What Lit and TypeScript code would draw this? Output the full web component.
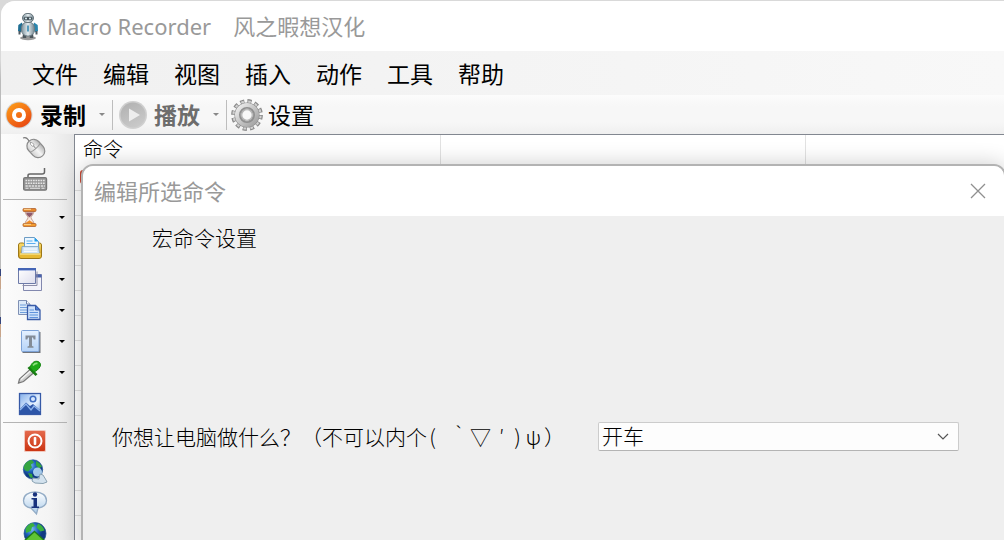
import { LitElement, html, css, svg, nothing, TemplateResult } from "lit";
import { customElement, property } from "lit/decorators.js";

const icons: Record<string, TemplateResult> = {
  robot: svg`
    <ellipse cx="14" cy="26" rx="8" ry="2.2" fill="#777" opacity=".75"/>
    <path d="M8 10.500 4.300 13l-.3 6 3 1.500 2-6z" fill="#1f6f94"/><path d="m20 10.500 3.700 2.500.3 6-3 1.500-2-6z" fill="#2a86ae"/>
    <path d="M5.500 19v3.500M22.500 19v3.500" stroke="#4e5960" stroke-width="2"/>
    <path d="M10.500 22v4M17.500 22v4" stroke="#4c565c" stroke-width="3.500"/>
    <rect x="7.500" y="10" width="13" height="14" rx="6" fill="url(#gSteel)" stroke="#6b7b84"/>
    <path d="M13.200 13.500h1.600v6h-1.600z" fill="#3288b1"/>
    <rect x="8.500" y="1.500" width="11" height="9" rx="4.500" fill="url(#gSteel)" stroke="#69767d"/>
    <rect x="9.800" y="4.800" width="8.400" height="3.400" rx="1.700" fill="#46535b"/>
    <circle cx="12" cy="6.500" r="1" fill="#dff2f8"/><circle cx="16" cy="6.500" r="1" fill="#dff2f8"/>`,
  record: svg`
    <circle cx="14" cy="14" r="13.500" fill="#d3d3d3"/><circle cx="14" cy="14" r="12.500" fill="url(#gOrange)"/>
    <circle cx="14" cy="14" r="5" fill="none" stroke="#fff" stroke-width="4"/>`,
  play: svg`
    <circle cx="14" cy="14" r="14" fill="#d0d0d0"/><circle cx="14" cy="14" r="12.500" fill="url(#gGray)"/>
    <path d="M10 7.500v13L21 14z" fill="#ededed"/>`,
  gear: svg`
    <circle cx="14" cy="14" r="12" fill="none" stroke="#8b8b8b" stroke-width="3.800" stroke-dasharray="3.600 2.683"/>
    <circle cx="14" cy="14" r="11.500" fill="none" stroke="#d2d2d2" stroke-width="2.600" stroke-dasharray="2.200 3.821" stroke-dashoffset="-.7"/>
    <circle cx="14" cy="14" r="8" fill="none" stroke="#8e8e8e" stroke-width="6"/>
    <circle cx="14" cy="14" r="8" fill="none" stroke="url(#gMetal)" stroke-width="5"/>
    <circle cx="14" cy="14" r="6.300" fill="none" stroke="#8f8f8f" stroke-width="1.400"/>
    <circle cx="14" cy="14" r="4.600" fill="#f8f8f8" stroke="#b5b5b5"/>`,
  mouse: svg`
    <path d="M2 2c3-1 4 0 5 1.500l2 3" fill="none" stroke="#777" stroke-width="1.300"/>
    <g transform="rotate(-42 15 13)"><rect x="8.500" y="2.500" width="13.500" height="20" rx="6.700" fill="url(#gMouse)" stroke="#8b8b8b" stroke-width="1.200"/>
    <path d="M8.500 11.500c3 1.500 10 1.500 13.500 0M15.200 3v9" fill="none" stroke="#999"/><rect x="14" y="5" width="2.500" height="4" rx="1.200" fill="#fff" stroke="#888" stroke-width=".7"/></g>`,
  keyboard: svg`
    <path d="M7 11V8.500Q7 7 9 7h12q2.500 0 2.500-2V1" fill="none" stroke="#666" stroke-width="1.500"/>
    <rect x="2.600" y="10.600" width="23" height="12.600" rx="1.500" fill="#959595" stroke="#777" stroke-width="1.200"/>
    <path d="M4.500 13.500h19.500M4.500 16.200h19.500" stroke="#e4e4e4" stroke-width="1.500" stroke-dasharray="1.700 .8"/>
    <path d="M4.500 18.900h19.500" stroke="#dedede" stroke-width="1.500" stroke-dasharray="2.300 .8"/>
    <path d="M4.500 21.300h3M9 21.300h10M20.500 21.300h3" stroke="#e6e6e6" stroke-width="1.100"/>`,
  hourglass: svg`
    <path d="M9 7c0 4 3 4.500 3 6.500S9 17 9 20h9c0-3-3-4.500-3-6.500S18 11 18 7z" fill="#f7e7df" stroke="#c59c8c"/>
    <path d="M10 8.500h7c-.4 2.500-2.500 3.500-3.500 5-1-1.500-3.100-2.500-3.500-5z" fill="#8f5a6a"/>
    <path d="M9.500 20c.5-2.500 3-2 4-4 1 2 3.500 1.500 4 4z" fill="#f08c24"/>
    <rect x="7" y="4.500" width="13" height="3" rx="1" fill="#e5882d" stroke="#b0622d" stroke-width=".8"/>
    <rect x="7" y="19.500" width="13" height="3" rx="1" fill="#f29a2e" stroke="#b0622d" stroke-width=".8"/>
    <path d="M8 5.300h7M8 20.300h7" stroke="#ffd99a"/>`,
  folder: svg`
    <path d="M2.500 10q0-2 2-2h3l2 2h9l2-2h3q2 0 2 2v11q0 2.500-2.500 2.500H5q-2.500 0-2.500-2.500z" fill="url(#gGold)" stroke="#9d7817"/>
    <path d="M8.500 2.500h10l4 4V15h-14z" fill="#eaf6ff" stroke="#6d9cc4"/><path d="M18.500 2.500v4h4z" fill="#1fa0f0"/>
    <path d="M10.500 6h6M10.500 8.500h9" stroke="#5aaef0"/>
    <path d="M6 11.500h16.500l1 7H5.500z" fill="#cfe4f7" stroke="#7aa0bd" stroke-width=".8"/><path d="M8 14h13M8 16.300h13" stroke="#fff"/>
    <path d="M3.500 18.500h21.500v2.500q0 2-2 2H5.500q-2 0-2-2z" fill="#e7ba34"/><path d="M4 19h20.500" stroke="#fff0a8"/>`,
  windows: svg`
    <path d="M7.500 8.500h18v16h-18z" fill="#f2f2fa" stroke="#8288ae"/><path d="M20 8.500h5.500v3H20z" fill="#4963ab"/>
    <path d="M6.500 19.500h14.500v-14" fill="none" stroke="#8c8ca8"/>
    <path d="M2.500 2.500h17v15h-17z" fill="url(#gPane)" stroke="#6d7aa8"/><path d="M2 2h18v2.500H2z" fill="#4565b5"/><path d="M3 4.500h16" stroke="#a9b9e4"/>`,
  docs: svg`
    <path d="M2.500 3.500h8l3.500 3.500v10.500H2.500z" fill="#dceaf9" stroke="#7f90b4"/><path d="M10.500 3.500V7H14" fill="#fff" stroke="#6b7fa9"/>
    <path d="M4 8h6M4 10.500h7M4 13h7M4 15.500h7" stroke="#6f9edb"/>
    <path d="M11.500 8.500h8l4.500 4.500v9.500H11.500z" fill="#cfe2fb" stroke="#3a5ca8" stroke-width="1.300"/><path d="M19.500 8.500V13H24z" fill="#4c7cd2" stroke="#3a5ca8"/>
    <path d="M13.500 13h4.500M13.500 15.500h8.500M13.500 18h8.500M13.500 20.500h8.500" stroke="#5f93dc" stroke-width="1.200"/>`,
  textbox: svg`
    <rect x="6.500" y="4" width="18" height="21" fill="#70757d"/><rect x="5.500" y="2.500" width="17.500" height="21" rx="1" fill="url(#gBlue)" stroke="#7da2d6"/>
    <path d="M9.500 7.500h10v4h-1.800l-.7-2H16v8.500l1.500.5v1.300h-6V18.500L13 18V9.500h-1l-.7 2H9.500z" fill="#838c97"/>`,
  dropper: svg`
    <path d="m2.500 24 1-4L14 10.500l3.500 3.500L7.500 22.500z" fill="#cfcfcf" stroke="#777" stroke-width="1.200"/><path d="m5 20.500 10-9" stroke="#f5f5f5" stroke-width="1.300"/>
    <path d="m11.500 9 2-1.800 8 8-2 1.800z" fill="#187b13"/>
    <path d="M14 8.500c1.500-4.500 4-6.500 7-6.200 3 .3 4.400 3 2.800 5.700-1.200 2.200-3.300 4-5.800 5z" fill="#1eaa19" stroke="#14850f"/><path d="M17 6.500q2-2.500 4.500-2" stroke="#8be27c" stroke-width="1.700" fill="none"/>`,
  picture: svg`
    <rect x="2.500" y="2.500" width="23" height="23" fill="#fff"/><rect x="3.500" y="3.500" width="21" height="21" fill="url(#gSky)" stroke="#3659a6" stroke-width="1.300"/>
    <circle cx="17" cy="9" r="2.800" fill="#d5e7ff" stroke="#3e6cc0" stroke-width="1.500"/>
    <path d="M4 19 10 12.500l4 3.500 3-2 7 6v4H4z" fill="#2d56a8"/><path d="m4 20 6-6 5 6 3-4 6 5" fill="none" stroke="#8db4ec" stroke-width="1.300"/>`,
  power: svg`
    <rect x="3" y="3" width="22" height="22" rx="1.500" fill="#f1c6bb"/><rect x="4" y="4" width="20" height="20" rx="1" fill="url(#gRed)"/>
    <circle cx="14" cy="14" r="6.500" fill="none" stroke="#fff" stroke-width="2"/><rect x="12.700" y="10" width="2.600" height="8" rx="1" fill="#fff"/>`,
  web: svg`
    <circle cx="12" cy="11.500" r="9.700" fill="url(#gGlobe)" stroke="#245898" stroke-width=".7"/>
    <path d="M4 6q3-3.700 7-4l2 2.500-3 2 1 3-4 4-3-1-1.500-3zM15 3q4 1.500 6 5.500l-3 2-3-3zM7 15l4 1 1 4-3-.5z" fill="#35a541"/>
    <circle cx="16.500" cy="14" r="4.500" fill="#b5d9f5" opacity=".9"/>
    <path d="m12 20 6 1 1-5 3 1 3 5 1 2-4 1.500-8-.5-3-2z" fill="#d3e2ee" stroke="#8aa2b2"/>`,
  info: svg`
    <path d="M14 3c-7 0-11.500 3.500-11.500 8.500 0 4.300 3 6.800 7.500 7.500l5.500 6 1.500-6c5-.7 8.500-3.500 8.500-7.500C25.500 6.500 21 3 14 3z" fill="url(#gBubble)" stroke="#93acc6" stroke-width="1.300"/>
    <circle cx="14" cy="5.500" r="2.200" fill="#17327e"/><path d="M10.500 9h5.500v8.500h2V19h-7.500v-1.500h2v-7h-2z" fill="#17327e"/>`,
  upload: svg`
    <circle cx="14" cy="13.500" r="11" fill="url(#gGlobe)" stroke="#22548c" stroke-width=".7"/>
    <path d="M4.500 9Q7 3.500 12 3l2 3-3 1-1 4-5 2zM17 3.500q5 2 6.500 7l-4 1-4-4z" fill="#3bb13f"/>
    <path d="m13.500 11.500 11 10H19V27H8v-5.500H2.500z" fill="#5fc534" stroke="#1e7b19" stroke-width="1.300"/>`,
};

const gradients = svg`<defs>
  <linearGradient id="gSteel"><stop stop-color="#7d929d"/><stop offset=".5" stop-color="#e5edf0"/><stop offset="1" stop-color="#71858f"/></linearGradient>
  <linearGradient id="gOrange" x2=".7" y2="1"><stop stop-color="#ffa31a"/><stop offset="1" stop-color="#e94a12"/></linearGradient>
  <linearGradient id="gGray" x2=".5" y2="1"><stop stop-color="#b0b0b0"/><stop offset="1" stop-color="#c8c8c8"/></linearGradient>
  <linearGradient id="gMetal" x2="1" y2="1"><stop stop-color="#ececec"/><stop offset=".5" stop-color="#c6c6c6"/><stop offset="1" stop-color="#a2a2a2"/></linearGradient>
  <linearGradient id="gMouse"><stop stop-color="#d0d0d0"/><stop offset=".5" stop-color="#f4f4f4"/><stop offset="1" stop-color="#b4b4b4"/></linearGradient>
  <linearGradient id="gGold" x2="0" y2="1"><stop stop-color="#ffe06e"/><stop offset="1" stop-color="#c28d15"/></linearGradient>
  <linearGradient id="gPane" x2="1" y2="1"><stop stop-color="#fff"/><stop offset="1" stop-color="#dddded"/></linearGradient>
  <linearGradient id="gBlue" x2="0" y2="1"><stop stop-color="#e5f1ff"/><stop offset="1" stop-color="#b5d3f8"/></linearGradient>
  <linearGradient id="gSky" x2="1" y2="1"><stop stop-color="#83aeea"/><stop offset=".6" stop-color="#e7f3ff"/><stop offset="1" stop-color="#7aa5e3"/></linearGradient>
  <linearGradient id="gRed" x2="0" y2="1"><stop stop-color="#e4694c"/><stop offset="1" stop-color="#cc3513"/></linearGradient>
  <radialGradient id="gGlobe" cx=".35" cy=".3"><stop stop-color="#7dc1f5"/><stop offset=".6" stop-color="#1e63bd"/><stop offset="1" stop-color="#103a83"/></radialGradient>
  <linearGradient id="gBubble" x2="0" y2="1"><stop stop-color="#fff"/><stop offset="1" stop-color="#a9cbea"/></linearGradient>
</defs>`;

@customElement("app-icon")
class AppIcon extends LitElement {
  @property() name = "";
  static styles = css`
    :host { display: block; width: 28px; height: 28px; flex: none; }
    svg { display: block; width: 100%; height: 100%; overflow: visible; }
  `;
  render() {
    return html`<svg viewBox="0 0 28 28" aria-hidden="true">${gradients}${icons[this.name] ?? nothing}</svg>`;
  }
}

interface Tool { icon: string; label: string; menu?: boolean; }

@customElement("app-root")
class AppRoot extends LitElement {
  static styles = css`
    * { box-sizing: border-box; }
    :host {
      display: block; height: 100vh; overflow: hidden; padding: 1px 0 0 1px; box-sizing: border-box;
      background: linear-gradient(#d9d9d9 0 60px, #bbb 80px 269px, #35457c 269px 276px, #c8a58a 276px 289px, #bbb 289px 317px, #35457c 317px 324px, #c8a58a 324px 337px, #bbb 337px);
      font-family: "Noto Sans", "Noto Sans CJK SC", sans-serif; color: #000;
    }
    button { font: inherit; color: inherit; border: 0; padding: 0; background: none; }
    .window { display: flex; flex-direction: column; height: 100%; background: #f0f0f0; border-top-left-radius: 14px; overflow: hidden; }
    .title { display: flex; align-items: center; height: 50px; flex: none; padding-left: 13px; background: #fff; color: #999; }
    h1, h2, h3 { margin: 0; font-size: 22px; font-weight: 400; line-height: 32px; }
    h1 { display: flex; gap: 22px; padding-left: 5px; }
    .menu { display: flex; flex: none; gap: 25px; align-items: center; height: 44px; padding: 2px 0 0 31px; background: linear-gradient(90deg, #f0f0f0, #f8f8f8); font-size: 23px; }
    .menu button { line-height: 40px; }
    .bar { display: flex; flex: none; align-items: center; height: 39px; padding-left: 4px; font-size: 23px; line-height: 36px; background: linear-gradient(#fcfcfc, #f7f7f7 30%, #f7f7f7 70%, #efefef); }
    .bar button { display: flex; align-items: center; gap: 7px; }
    .bar .strong { font-weight: 600; }
    .bar .off { color: #6d6d6d; }
    .bar .gear { width: 32px; height: 32px; }
    .bar .wide { gap: 5px; padding-left: 4px; }
    .bar .off.strong { padding-left: 6px; }
    .bar .more { padding: 0 7px 0 13px; height: 30px; border-right: 1px solid #bdbdbd; }
    .arrow { width: 6px; height: 3px; background: currentColor; clip-path: polygon(0 0, 100% 0, 50% 100%); }
    .more .arrow { color: #888; }
    .work { display: flex; flex: 1; min-height: 0; }
    .tools { width: 73px; flex: none; background: linear-gradient(90deg, #fcfcfc, #f4f4f4 65%, #e6e6e6); }
    .tools button { display: flex; align-items: center; width: 68px; height: 31px; padding-left: 20px; }
    .tools .menu-tool { padding-left: 15px; gap: 15px; }
    .tools hr { width: 64px; height: 1px; margin: 3px 2px 2px; border: 0; background: #b4b4b4; }
    .list { position: relative; flex: 1; border: solid #828790; border-width: 1px 0 0 1px; background: #fff; }
    table { width: 100%; border-collapse: collapse; table-layout: fixed; }
    th { height: 30px; padding: 0 0 0 8px; border-right: 1px solid #e2e2e2; text-align: left; font-size: 20px; line-height: 30px; font-weight: 300; }
    th:last-child { border-right: 0; }
    .col { width: 365px; }
    td { height: 25px; padding: 0 5px; border-bottom: 1px solid #e2e2e2; }
    .mark { display: block; width: 14px; height: 14px; border-radius: 3px; background: #c74a36; }
    .dialog { position: absolute; top: 29px; left: 6px; right: -2px; bottom: -16px; border: 2px solid #b3b3b3; border-radius: 12px; overflow: hidden; background: #efefef; box-shadow: 0 0 22px rgba(0, 0, 0, .2); }
    .dialog header { display: flex; justify-content: space-between; align-items: center; height: 50px; padding: 0 18px 0 11px; background: #fff; color: #999; }
    .close, .close svg { display: block; width: 16px; height: 16px; }
    .content { padding: 6px 45px 0 29px; font-size: 21px; font-weight: 300; }
    h3 { padding-left: 40px; font-size: 21px; font-weight: 300; }
    .field { display: flex; align-items: center; gap: 33px; margin-top: 166px; }
    .field label { line-height: 32px; white-space: nowrap; font-family: "Noto Sans CJK SC", sans-serif; }
    .half, .full { display: inline-block; width: 21px; text-align: center; }
    .half { width: 11px; }
    .combo { position: relative; flex: 1; }
    select { display: block; width: 100%; height: 29px; padding: 0 3px; appearance: none; border: 1px solid #ccc; border-bottom-color: #b4b4b4; border-radius: 2px; background: #fdfdfd; color: #000; font: inherit; line-height: 27px; }
    .chevron { position: absolute; right: 10px; top: 11px; width: 12px; height: 8px; pointer-events: none; }
  `;

  private menus = ["文件", "编辑", "视图", "插入", "动作", "工具", "帮助"];
  private groups: Tool[][] = [
    [{ icon: "mouse", label: "鼠标" }, { icon: "keyboard", label: "键盘" }],
    [
      { icon: "hourglass", label: "等待", menu: true }, { icon: "folder", label: "文件", menu: true },
      { icon: "windows", label: "窗口", menu: true }, { icon: "docs", label: "剪贴板", menu: true },
      { icon: "textbox", label: "文本", menu: true }, { icon: "dropper", label: "颜色", menu: true },
      { icon: "picture", label: "图像", menu: true },
    ],
    [{ icon: "power", label: "关机" }, { icon: "web", label: "网站" }, { icon: "info", label: "消息" }, { icon: "upload", label: "上传" }],
  ];

  private tool(t: Tool) {
    return html`<button class=${t.menu ? "menu-tool" : ""} aria-label=${t.label}>
      <app-icon name=${t.icon}></app-icon>${t.menu ? html`<span class="arrow"></span>` : nothing}
    </button>`;
  }

  render() {
    return html`<div class="window">
      <header class="title"><app-icon name="robot"></app-icon><h1><span>Macro Recorder</span> <span>风之暇想汉化</span></h1></header>
      <nav class="menu">${this.menus.map((m) => html`<button>${m}</button>`)}</nav>
      <div class="bar" role="toolbar">
        <button class="strong"><app-icon name="record"></app-icon>录制</button>
        <button class="more" aria-label="录制选项"><span class="arrow"></span></button>
        <button class="strong off" aria-disabled="true"><app-icon name="play"></app-icon>播放</button>
        <button class="more" aria-label="播放选项"><span class="arrow"></span></button>
        <button class="wide"><app-icon class="gear" name="gear"></app-icon>设置</button>
      </div>
      <div class="work">
        <aside class="tools">${this.groups.map((g, i) => html`${i ? html`<hr />` : nothing}${g.map((t) => this.tool(t))}`)}</aside>
        <main class="list">
          <table>
            <thead><tr><th class="col">命令</th><th class="col"></th><th></th></tr></thead>
            <tbody>${Array.from({ length: 14 }, (_, i) => html`<tr><td>${i === 0 ? html`<span class="mark"></span>` : nothing}</td><td></td><td></td></tr>`)}</tbody>
          </table>
          <section class="dialog" role="dialog" aria-labelledby="dialog-title">
            <header>
              <h2 id="dialog-title">编辑所选命令</h2>
              <button class="close" aria-label="关闭"><svg viewBox="0 0 16 16"><path d="m1 1 14 14M15 1 1 15" stroke="#8f8f8f" stroke-width="1.300"/></svg></button>
            </header>
            <div class="content">
              <h3>宏命令设置</h3>
              <div class="field">
                <label for="action">你想让电脑做什么？（不可以内个<span class="half">(</span><span class="half"> </span><span class="full">‵</span><span class="full">▽</span><span class="full">′</span><span class="half">)</span><span class="full">ψ</span>）</label>
                <div class="combo">
                  <select id="action"><option>开车</option></select>
                  <svg class="chevron" viewBox="0 0 12 8"><path d="m1 1 5 5 5-5" fill="none" stroke="#555" stroke-width="1.200"/></svg>
                </div>
              </div>
            </div>
          </section>
        </main>
      </div>
    </div>`;
  }
}
